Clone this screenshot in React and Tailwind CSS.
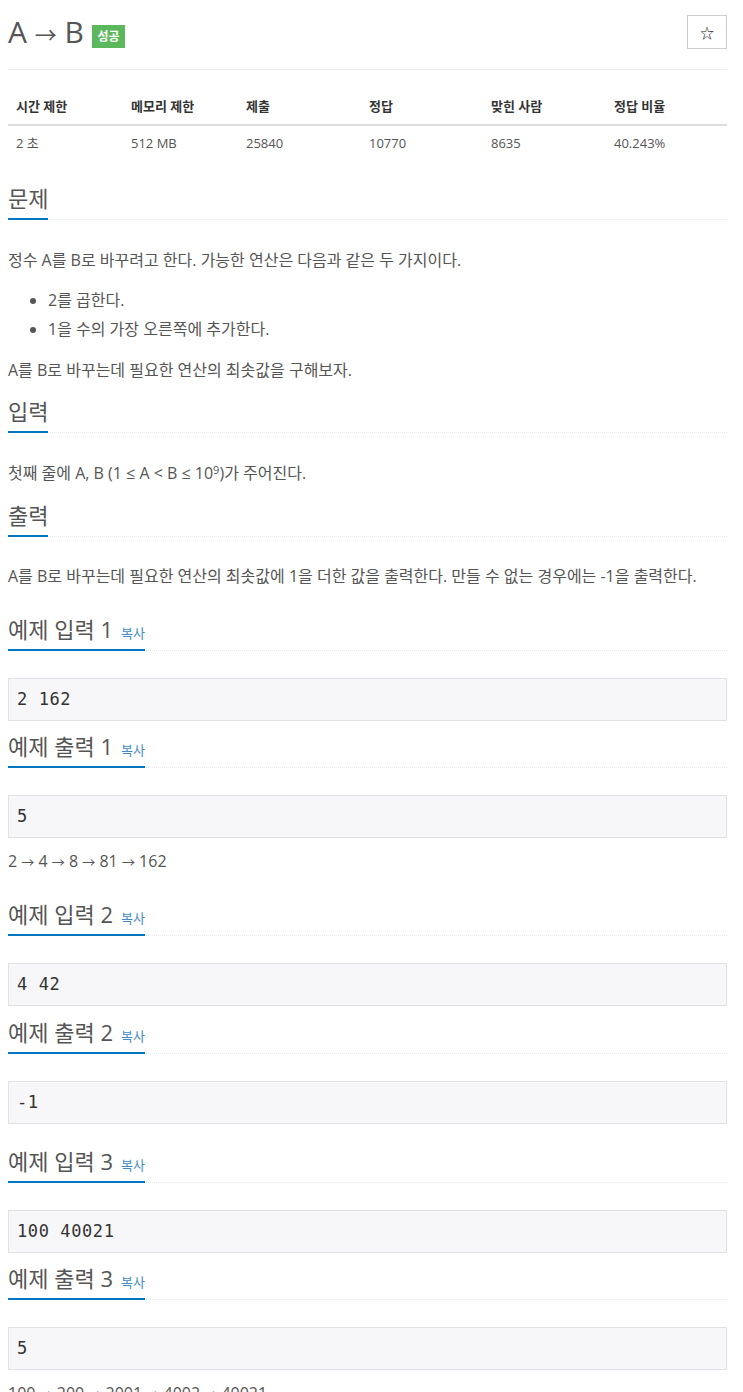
import React from "react";

const SANS = "font-['Open_Sans','Noto_Sans_CJK_KR',sans-serif]";

function Arrow({ className = "text-[13px]" }) {
  return <span className={`font-['Noto_Sans_CJK_KR',sans-serif] ${className}`}>→</span>;
}

function Chain({ items, className = "" }) {
  return (
    <p className={`leading-[28px] ${className}`}>
      {items.map((n, i) => (
        <React.Fragment key={i}>
          {i > 0 && (
            <>
              {" "}
              <Arrow />{" "}
            </>
          )}
          {n}
        </React.Fragment>
      ))}
    </p>
  );
}

function Headline({ children, copy, className = "" }) {
  return (
    <div className={`border-b border-dotted border-[#e4e9f0] ${className}`}>
      <h2 className="inline-block h-[37px] -mb-px border-b-2 border-[#0076c0] pb-[5px] text-[22px] leading-[30px] text-[#555]">
        {children}
        {copy && (
          <span className="ml-[8px] text-[13px] leading-[30px] text-[#428bca]">복사</span>
        )}
      </h2>
    </div>
  );
}

function Sample({ children, className = "" }) {
  return (
    <pre
      className={`border border-[#e1e1e8] bg-[#f7f7f9] px-[8px] py-[9px] font-['DejaVu_Sans_Mono',monospace] text-[17px] leading-[23px] tracking-[0.6px] text-[#333] ${className}`}
    >
      {children}
    </pre>
  );
}

const stats = [
  ["시간 제한", "2 초", "w-[115px]"],
  ["메모리 제한", "512 MB", "w-[115px]"],
  ["제출", "25840", "w-[123px]"],
  ["정답", "10770", "w-[122px]"],
  ["맞힌 사람", "8635", "w-[123px]"],
  ["정답 비율", "40.243%", "flex-1"],
];

export default function App() {
  return (
    <div className={`bg-white pl-[8px] pr-[16px] pb-10 ${SANS} text-[16px] text-[#555]`}>
      {/* 제목 */}
      <div className="mt-[15px] flex h-[34px] items-center justify-between">
        <div className="flex items-center">
          <h1 className="text-[30px] leading-[34px] text-[#555]">
            A <Arrow className="text-[22px]" /> B
          </h1>
          <span className="ml-[8px] mt-[9px] flex h-[23px] w-[33px] items-center justify-center bg-[#5cb85c] text-[12px] font-bold text-white">
            성공
          </span>
        </div>
        <button className="flex h-[34px] w-[40px] items-center justify-center border border-[#ccc] bg-white text-[14px] text-[#222]">
          ☆
        </button>
      </div>
      <div className="mt-[20px] border-t border-[#eee]" />

      {/* 통계 */}
      <div className="mt-[19px] text-[13px]">
        <div className="flex border-b-2 border-[#ddd] text-[#333]">
          {stats.map(([h, , w]) => (
            <div key={h} className={`${w} px-[8px] py-[8px] font-bold leading-[19px]`}>
              {h}
            </div>
          ))}
        </div>
        <div className="flex text-[#555]">
          {stats.map(([h, v, w]) => (
            <div key={h} className={`${w} px-[8px] py-[8px] leading-[19px]`}>
              {v}
            </div>
          ))}
        </div>
      </div>

      {/* 문제 */}
      <Headline className="mt-[22px]">문제</Headline>
      <div className="mt-[26px] leading-[29px]">
        <p>정수 A를 B로 바꾸려고 한다. 가능한 연산은 다음과 같은 두 가지이다.</p>
        <ul className="mt-[11px] list-disc pl-[40px]">
          <li>2를 곱한다.</li>
          <li>1을 수의 가장 오른쪽에 추가한다.</li>
        </ul>
        <p className="mt-[12px]">A를 B로 바꾸는데 필요한 연산의 최솟값을 구해보자.</p>
      </div>

      {/* 입력 */}
      <Headline className="mt-[11px]">입력</Headline>
      <p className="mt-[26px] leading-[29px]">
        첫째 줄에 A, B (1 ≤ A &lt; B ≤ 10
        <sup className="text-[11px]">9</sup>)가 주어진다.
      </p>

      {/* 출력 */}
      <Headline className="mt-[12px]">출력</Headline>
      <p className="mt-[25px] leading-[29px]">
        A를 B로 바꾸는데 필요한 연산의 최솟값에 1을 더한 값을 출력한다. 만들 수 없는 경우에는 -1을 출력한다.
      </p>

      {/* 예제 1 */}
      <Headline copy className="mt-[23px]">예제 입력 1</Headline>
      <Sample className="mt-[27px]">2 162</Sample>
      <Headline copy className="mt-[10px]">예제 출력 1</Headline>
      <Sample className="mt-[27px]">5</Sample>
      <Chain className="mt-[9px]" items={["2", "4", "8", "81", "162"]} />

      {/* 예제 2 */}
      <Headline copy className="mt-[23px]">예제 입력 2</Headline>
      <Sample className="mt-[27px]">4 42</Sample>
      <Headline copy className="mt-[11px]">예제 출력 2</Headline>
      <Sample className="mt-[27px]">-1</Sample>

      {/* 예제 3 */}
      <Headline copy className="mt-[22px]">예제 입력 3</Headline>
      <Sample className="mt-[27px]">100 40021</Sample>
      <Headline copy className="mt-[10px]">예제 출력 3</Headline>
      <Sample className="mt-[27px]">5</Sample>
      <Chain className="mt-[9px]" items={["100", "200", "2001", "4002", "40021"]} />
    </div>
  );
}
